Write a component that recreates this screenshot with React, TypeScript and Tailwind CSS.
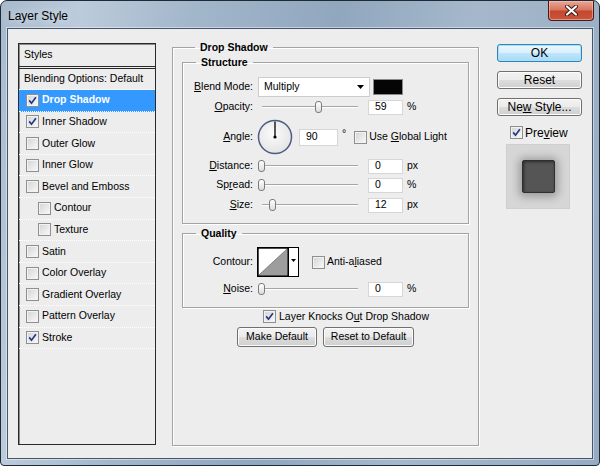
import React from 'react';

const styleItems = [
  { label: 'Drop Shadow', checked: true, selected: true },
  { label: 'Inner Shadow', checked: true },
  { label: 'Outer Glow' },
  { label: 'Inner Glow' },
  { label: 'Bevel and Emboss' },
  { label: 'Contour', indent: true },
  { label: 'Texture', indent: true },
  { label: 'Satin' },
  { label: 'Color Overlay' },
  { label: 'Gradient Overlay' },
  { label: 'Pattern Overlay' },
  { label: 'Stroke', checked: true },
];

const CheckBox = ({ checked = false }: { checked?: boolean }) => (
  <span className="flex h-[13px] w-[13px] shrink-0 items-center justify-center border border-[#8e8f8f] bg-[linear-gradient(135deg,#d3d3d3,#fafafa)] shadow-[inset_0_0_0_1px_#f2f2f2]">
    {checked && (
      <svg width="9" height="9" viewBox="0 0 9 9">
        <path d="M1.2 4.4 L3.5 7.2 L7.9 1.2" fill="none" stroke="#24388a" strokeWidth="1.7" />
      </svg>
    )}
  </span>
);

const Slider = ({ pos }: { pos: number }) => (
  <div className="relative h-[16px] w-[104px] shrink-0">
    <div className="absolute left-[4px] right-[4px] top-[7px] h-[2px] border-t border-b border-t-[#a5a5a5] border-b-white" />
    <div
      className="absolute top-[2px] h-[12px] w-[7px] rounded-[3px] border border-[#7c7c7c] bg-[linear-gradient(#ffffff,#dcdcdc)]"
      style={{ left: pos }}
    />
  </div>
);

const NumBox = ({ value, w = 'w-[35px]' }: { value: string; w?: string }) => (
  <div className={`${w} flex h-[15px] shrink-0 items-center border border-[#d6d6d6] bg-white pl-[6px]`}>{value}</div>
);

const Label = ({ children }: { children: React.ReactNode }) => (
  <span className="w-[70px] shrink-0 text-right">{children}</span>
);

const SliderRow = ({ label, pos, value, unit, className = '' }: { label: React.ReactNode; pos: number; value: string; unit: string; className?: string }) => (
  <div className={`flex h-[16px] items-center ${className}`}>
    <Label>{label}</Label>
    <div className="ml-[5px]">
      <Slider pos={pos} />
    </div>
    <div className="ml-[6px]">
      <NumBox value={value} />
    </div>
    <span className="ml-[4px]">{unit}</span>
  </div>
);

const Button = ({ children, className = '' }: { children: React.ReactNode; className?: string }) => (
  <div
    className={`flex items-center justify-center rounded-[3px] border border-[#707070] bg-[linear-gradient(#f2f2f2_0%,#ebebeb_50%,#dddddd_51%,#cfcfcf_100%)] shadow-[inset_0_0_0_1px_#fcfcfc] ${className}`}
  >
    {children}
  </div>
);

export default function App() {
  return (
    <div className="flex h-[466px] w-[600px] flex-col overflow-hidden rounded-t-[7px] rounded-b-[4px] border border-[#1e2a36] bg-[linear-gradient(100deg,#a7bacd_0%,#bccbdb_12%,#a3b7cb_28%,#91a7be_50%,#a5b8cb_70%,#96abc2_100%)] font-['Liberation_Sans',Arial,sans-serif] text-[10.5px] text-black">
      {/* Title bar */}
      <div className="flex h-[27px] shrink-0 items-start justify-between">
        <span className="pl-[7px] pt-[6px] text-[12px] [text-shadow:0_0_8px_rgba(255,255,255,0.9)]">Layer Style</span>
        <div className="mr-[5px] flex h-[20px] w-[46px] items-center justify-center rounded-b-[4px] border border-t-0 border-[#4a1a12] bg-[linear-gradient(#e9a899_0%,#d8765f_45%,#c4472f_55%,#c9563c_100%)] shadow-[inset_0_0_0_1px_rgba(255,200,190,0.55)]">
          <svg width="13" height="11" viewBox="0 0 13 11">
            <path d="M2 1.5 L11 9.5 M11 1.5 L2 9.5" stroke="#3b1710" strokeWidth="4" strokeLinecap="round" />
            <path d="M2 1.5 L11 9.5 M11 1.5 L2 9.5" stroke="#ffffff" strokeWidth="2.2" strokeLinecap="round" />
          </svg>
        </div>
      </div>

      {/* Client area */}
      <div className="mx-[6px] mb-[6px] flex flex-1 items-start border border-[#44566b] bg-[#ededed] pl-[10px] pt-[11px] shadow-[0_0_0_1px_rgba(255,255,255,0.45)]">
        {/* Styles list */}
        <div className="mt-[3px] flex h-[402px] w-[138px] shrink-0 flex-col border border-[#2a2a2a] shadow-[inset_1px_1px_0_#8a8a8a]">
          <div className="flex h-[25px] shrink-0 items-center border-b-[3px] border-double border-[#2a2a2a] pl-[5px]">Styles</div>
          <div className="flex h-[21px] shrink-0 items-center border-b border-dotted border-white pl-[5px]">Blending Options: Default</div>
          {styleItems.map((item) => (
            <div
              key={item.label}
              className={`flex h-[21.6px] shrink-0 items-center gap-[3px] border-b border-dotted border-white ${item.indent ? 'pl-[19px]' : 'pl-[7px]'} ${item.selected ? 'bg-[#3399ff] font-bold text-white' : ''}`}
            >
              <CheckBox checked={item.checked} />
              <span>{item.label}</span>
            </div>
          ))}
        </div>

        {/* Drop Shadow */}
        <fieldset className="ml-[16px] h-[406px] w-[307px] shrink-0 border border-[#a3a3a3] px-[9px] shadow-[inset_1px_1px_0_#fff,1px_1px_0_#fff]">
          <legend className="ml-[13px] px-[5px] text-[10.5px] font-bold leading-[14px]">Drop Shadow</legend>

          <fieldset className="mt-[1px] w-[287px] border border-[#a3a3a3] pb-[10px] shadow-[inset_1px_1px_0_#fff,1px_1px_0_#fff]">
            <legend className="ml-[13px] px-[5px] font-bold leading-[14px]">Structure</legend>

            <div className="mt-[8px] flex h-[20px] items-center">
              <Label>
                <u>B</u>lend Mode:
              </Label>
              <div className="ml-[5px] flex h-[20px] w-[112px] items-center justify-between border border-[#cdcdcd] bg-white pl-[5px] pr-[5px]">
                <span>Multiply</span>
                <svg width="7" height="4" viewBox="0 0 7 4">
                  <path d="M0 0 H7 L3.5 4 Z" fill="#000" />
                </svg>
              </div>
              <div className="ml-[3px] h-[16px] w-[30px] border border-[#8a8a8a] bg-[#050505]" />
            </div>

            <SliderRow className="mt-[2px]" label={<><u>O</u>pacity:</>} pos={57} value="59" unit="%" />

            <div className="mt-[4px] flex h-[36px] items-center">
              <Label>
                <u>A</u>ngle:
              </Label>
              <svg className="ml-[4px] shrink-0" width="36" height="36" viewBox="0 0 36 36">
                <defs>
                  <radialGradient id="dialFill" cx="0.45" cy="0.4" r="0.6">
                    <stop offset="0" stopColor="#fbfbfb" />
                    <stop offset="1" stopColor="#e4e4e4" />
                  </radialGradient>
                </defs>
                <circle cx="18" cy="18" r="16.5" fill="url(#dialFill)" stroke="#4c5d80" strokeWidth="1.5" />
                <line x1="18" y1="18" x2="18" y2="2.5" stroke="#000" strokeWidth="1.3" />
                <circle cx="18" cy="18" r="1.6" fill="#000" />
              </svg>
              <div className="ml-[6px]">
                <NumBox value="90" w="w-[39px] h-[17px]" />
              </div>
              <span className="ml-[4px] -mt-[6px]">°</span>
              <div className="ml-[8px]">
                <CheckBox />
              </div>
              <span className="ml-[2px]">
                Use <u>G</u>lobal Light
              </span>
            </div>

            <SliderRow className="mt-[3px]" label={<><u>D</u>istance:</>} pos={0} value="0" unit="px" />
            <SliderRow className="mt-[3px]" label={<>Sp<u>r</u>ead:</>} pos={0} value="0" unit="%" />
            <SliderRow className="mt-[4px]" label={<><u>S</u>ize:</>} pos={11} value="12" unit="px" />
          </fieldset>

          <fieldset className="mt-[2px] w-[287px] border border-[#a3a3a3] pb-[10px] shadow-[inset_1px_1px_0_#fff,1px_1px_0_#fff]">
            <legend className="ml-[13px] px-[5px] font-bold leading-[14px]">Quality</legend>

            <div className="mt-[7px] flex h-[30px] items-center">
              <Label>Contour:</Label>
              <svg className="ml-[4px] shrink-0" width="42" height="30" viewBox="0 0 42 30">
                <rect x="0.5" y="0.5" width="41" height="29" fill="#fff" stroke="#000" />
                <path d="M2 28 L30 2 L30 28 Z" fill="#9d9d9d" />
                <line x1="2" y1="28" x2="30" y2="2" stroke="#6e6e6e" strokeWidth="0.8" />
                <rect x="1" y="1" width="30" height="28" fill="none" stroke="#000" strokeWidth="1.4" />
                <line x1="31.5" y1="1" x2="31.5" y2="29" stroke="#000" />
                <path d="M34 12 H39 L36.5 15 Z" fill="#000" />
              </svg>
              <div className="ml-[13px]">
                <CheckBox />
              </div>
              <span className="ml-[2px]">
                Anti-a<u>l</u>iased
              </span>
            </div>

            <SliderRow className="mt-[4px]" label={<><u>N</u>oise:</>} pos={0} value="0" unit="%" />
          </fieldset>

          <div className="mt-[2px] flex h-[13px] items-center pl-[81px]">
            <CheckBox checked />
            <span className="ml-[3px]">
              Layer Knocks O<u>u</u>t Drop Shadow
            </span>
          </div>

          <div className="mt-[4px] flex gap-[6px] pl-[55px]">
            <Button className="h-[20px] w-[80px]">Make Default</Button>
            <Button className="h-[20px] w-[91px]">Reset to Default</Button>
          </div>
        </fieldset>

        {/* Right column */}
        <div className="ml-[18px] mt-[4px] flex w-[85px] shrink-0 flex-col text-[12px]">
          <div className="flex h-[18px] items-center justify-center rounded-[3px] border border-[#3c7fb1] bg-[linear-gradient(#eaf6fd_0%,#d9f0fc_50%,#bee6fd_51%,#a7d9f5_100%)] shadow-[inset_0_0_0_1px_#9fe3ff]">
            OK
          </div>
          <Button className="mt-[9px] h-[18px]">Reset</Button>
          <Button className="mt-[9px] h-[18px]">
            <span>
              Ne<u>w</u> Style...
            </span>
          </Button>
          <div className="ml-[13px] mt-[10px] flex h-[13px] items-center">
            <CheckBox checked />
            <span className="ml-[2px]">
              Pre<u>v</u>iew
            </span>
          </div>
          <div className="ml-[9px] mt-[5px] flex h-[65px] w-[64px] items-center justify-center border border-[#cfcfcf] bg-[#d6d6d6]">
            <div className="h-[33px] w-[33px] rounded-[2px] border border-[#2f2f2f] bg-[#555555] shadow-[0_1px_8px_3px_rgba(0,0,0,0.28),inset_1px_1px_3px_rgba(0,0,0,0.5)]" />
          </div>
        </div>
      </div>
    </div>
  );
}
